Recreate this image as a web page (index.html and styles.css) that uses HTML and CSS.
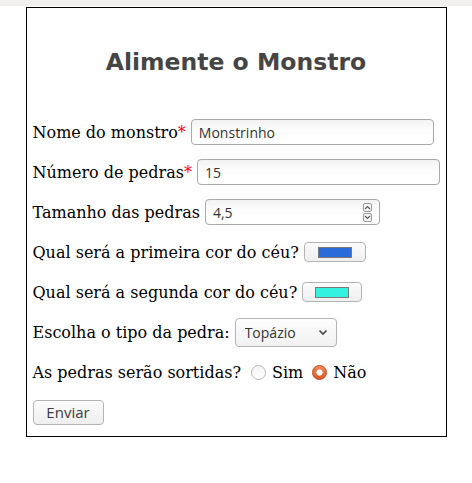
FILE: index.html
```html
<!DOCTYPE html>
<html lang="pt-BR">
<head>
<meta charset="utf-8">
<title>Alimente o Monstro</title>
<link rel="stylesheet" href="styles.css">
</head>
<body>
<div class="topbar"></div>
<form class="box">
  <h2 class="title">Alimente o Monstro</h2>
  <div class="row">
    <label for="nome">Nome do monstro<span class="req">*</span></label>
    <input id="nome" class="field text" type="text" value="Monstrinho">
  </div>
  <div class="row">
    <label for="num">Número de pedras<span class="req">*</span></label>
    <input id="num" class="field text" type="text" value="15">
  </div>
  <div class="row">
    <label for="tam">Tamanho das pedras</label>
    <div class="field numbox">
      <input id="tam" class="numinput" type="text" inputmode="decimal" value="4,5">
      <div class="spin">
        <span class="spinbtn"><svg width="7" height="5" viewBox="0 0 7 5"><path d="M1 4 L3.5 1.5 L6 4" fill="none" stroke="#555" stroke-width="1.1"/></svg></span>
        <span class="spinbtn"><svg width="7" height="5" viewBox="0 0 7 5"><path d="M1 1 L3.5 3.5 L6 1" fill="none" stroke="#555" stroke-width="1.1"/></svg></span>
      </div>
    </div>
  </div>
  <div class="row">
    <label>Qual será a primeira cor do céu?</label>
    <button type="button" class="colorbtn"><span class="swatch swatch-blue"></span></button>
  </div>
  <div class="row">
    <label>Qual será a segunda cor do céu?</label>
    <button type="button" class="colorbtn colorbtn-2"><span class="swatch swatch-cyan"></span></button>
  </div>
  <div class="row">
    <label for="tipo">Escolha o tipo da pedra:</label>
    <div class="selectbox">
      <select id="tipo" class="select">
        <option>Topázio</option>
        <option>Rubi</option>
        <option>Safira</option>
      </select>
      <svg class="chev" width="10" height="7" viewBox="0 0 10 7"><path d="M1.5 1.5 L5 5 L8.5 1.5" fill="none" stroke="#444" stroke-width="1.6"/></svg>
    </div>
  </div>
  <div class="row">
    <span class="lbl">As pedras serão sortidas?</span>
    <input type="radio" name="sort" id="sim" class="radio radio-first">
    <label for="sim">Sim</label>
    <input type="radio" name="sort" id="nao" class="radio" checked>
    <label for="nao">Não</label>
  </div>
  <div class="row">
    <button type="submit" class="submit">Enviar</button>
  </div>
</form>
</body>
</html>
```
FILE: styles.css
```css
html, body {
  margin: 0;
  padding: 0;
  background: #fff;
}

body {
  font-family: "DejaVu Serif", serif;
  font-size: 16px;
  color: #000;
}

.topbar {
  height: 6px;
  background: #f1f0ee;
}

.box {
  box-sizing: border-box;
  width: 421px;
  margin: 1px auto 0;
  border: 1px solid #000;
  padding: 40px 0 4px 6px;
  display: flex;
  flex-direction: column;
}

.title {
  margin: 0 0 36px;
  font-family: "DejaVu Sans", sans-serif;
  font-weight: bold;
  font-size: 23.5px;
  line-height: 28px;
  color: #454545;
  text-align: center;
  padding-right: 6px;
}

.row {
  height: 40px;
  display: flex;
  align-items: center;
  gap: 5px;
  white-space: nowrap;
}

.req {
  color: #ff0000;
}

.field {
  box-sizing: border-box;
  height: 26px;
  border: 1px solid #a9a9a9;
  border-radius: 4px;
  background: linear-gradient(#f3f3f3, #fcfcfc 40%, #fff);
  font-family: "Open Sans", "DejaVu Sans", sans-serif;
  font-size: 14px;
  color: #333;
}

.text {
  width: 243px;
  padding: 0 7px;
  outline: none;
}

.numbox {
  width: 175px;
  display: flex;
  align-items: center;
  padding: 0 7px 0 7px;
}

.numinput {
  flex: 1;
  min-width: 0;
  border: 0;
  background: transparent;
  font: inherit;
  color: inherit;
  padding: 0;
  outline: none;
}

.spin {
  display: flex;
  flex-direction: column;
  gap: 1px;
}

.spinbtn {
  width: 9px;
  height: 9px;
  box-sizing: border-box;
  border: 1px solid #9a9a9a;
  border-radius: 2px;
  background: #f7f7f7;
  display: flex;
  align-items: center;
  justify-content: center;
}

.colorbtn {
  box-sizing: border-box;
  width: 62px;
  height: 20px;
  padding: 0;
  border: 1px solid #b4b4b4;
  border-radius: 4px;
  background: linear-gradient(#fbfbfb, #efefef);
  display: flex;
  align-items: center;
  justify-content: center;
}

.colorbtn-2 {
  width: 60px;
}

.swatch {
  display: block;
  box-sizing: border-box;
  width: 34px;
  height: 11px;
  border: 1px solid #7a7a7a;
}

.swatch-blue {
  background: #2b6bd9;
}

.swatch-cyan {
  background: #33f2e0;
}

.selectbox {
  box-sizing: border-box;
  width: 102px;
  height: 29px;
  border: 1px solid #b4b4b4;
  border-radius: 4px;
  background: linear-gradient(#fdfdfd, #f1f1f1);
  display: flex;
  align-items: center;
  padding: 0 8px 0 9px;
}

.select {
  appearance: none;
  -webkit-appearance: none;
  flex: 1;
  min-width: 0;
  border: 0;
  background: transparent;
  padding: 0;
  font-family: "Open Sans", "DejaVu Sans", sans-serif;
  font-size: 14px;
  color: #333;
  outline: none;
}

.chev {
  display: block;
}

.radio {
  appearance: none;
  -webkit-appearance: none;
  margin: 0 1px 0 4px;
  width: 15px;
  height: 15px;
  border-radius: 50%;
  border: 1px solid #b8b8b8;
  background: linear-gradient(#f4f4f4, #fff);
  box-sizing: border-box;
}

.radio-first {
  margin-left: 5px;
}

.radio:checked {
  border-color: #c0471a;
  background: radial-gradient(circle, #fff 0 2.8px, transparent 3.4px),
              linear-gradient(#f28a5c, #dd5522);
}

.submit {
  box-sizing: border-box;
  width: 71px;
  height: 25px;
  padding: 0;
  border: 1px solid #b4b4b4;
  border-radius: 4px;
  background: linear-gradient(#fcfcfc, #eeeeee);
  font-family: "Open Sans", "DejaVu Sans", sans-serif;
  font-size: 15px;
  color: #3c3c3c;
}
```
